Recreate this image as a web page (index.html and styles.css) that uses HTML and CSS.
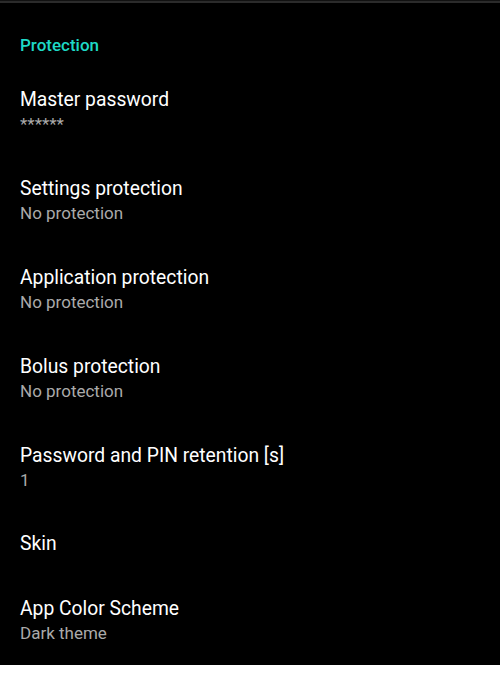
FILE: index.html
```html
<!DOCTYPE html>
<html lang="en">
<head>
  <meta charset="UTF-8" />
  <meta name="viewport" content="width=device-width, initial-scale=1.0"/>
  <title>Preferences - Protection</title>
  <link rel="stylesheet" href="styles.css">
</head>

<body>
  <div class="screen">
    <div class="category">Protection</div>

    <div class="pref two">
      <div class="pref-title">Master password</div>
      <div class="pref-summary">******</div>
    </div>
    <div class="pref two">
      <div class="pref-title">Settings protection</div>
      <div class="pref-summary">No protection</div>
    </div>
    <div class="pref two">
      <div class="pref-title">Application protection</div>
      <div class="pref-summary">No protection</div>
    </div>
    <div class="pref two">
      <div class="pref-title">Bolus protection</div>
      <div class="pref-summary">No protection</div>
    </div>
    <div class="pref two">
      <div class="pref-title">Password and PIN retention [s]</div>
      <div class="pref-summary">1</div>
    </div>
    <div class="pref">
      <div class="pref-title">Skin</div>
    </div>
    <div class="pref two">
      <div class="pref-title">App Color Scheme</div>
      <div class="pref-summary">Dark theme</div>
    </div>
  </div>
</body>
</html>
```

FILE: styles.css
```css
body { margin:0; background:#fff; font-family:Roboto, 'Noto Sans', sans-serif; }
.screen { height:664px; overflow:hidden; background:#000; border-top:1px solid #111; }
.screen::before { content:""; display:block; height:2px; background:#2b2b2b; }
.category { padding:32px 20px 12px; font-size:17px; line-height:20px; font-weight:500; color:#1ed9c6; }
.pref { min-height:64px; padding:0 20px; display:flex; flex-direction:column; justify-content:center; box-sizing:border-box; }
.pref.two { min-height:89px; }
.pref-title { font-size:19.3px; line-height:24px; color:#fff; }
.pref-summary { font-size:17px; line-height:24px; color:#aaa; }
```
